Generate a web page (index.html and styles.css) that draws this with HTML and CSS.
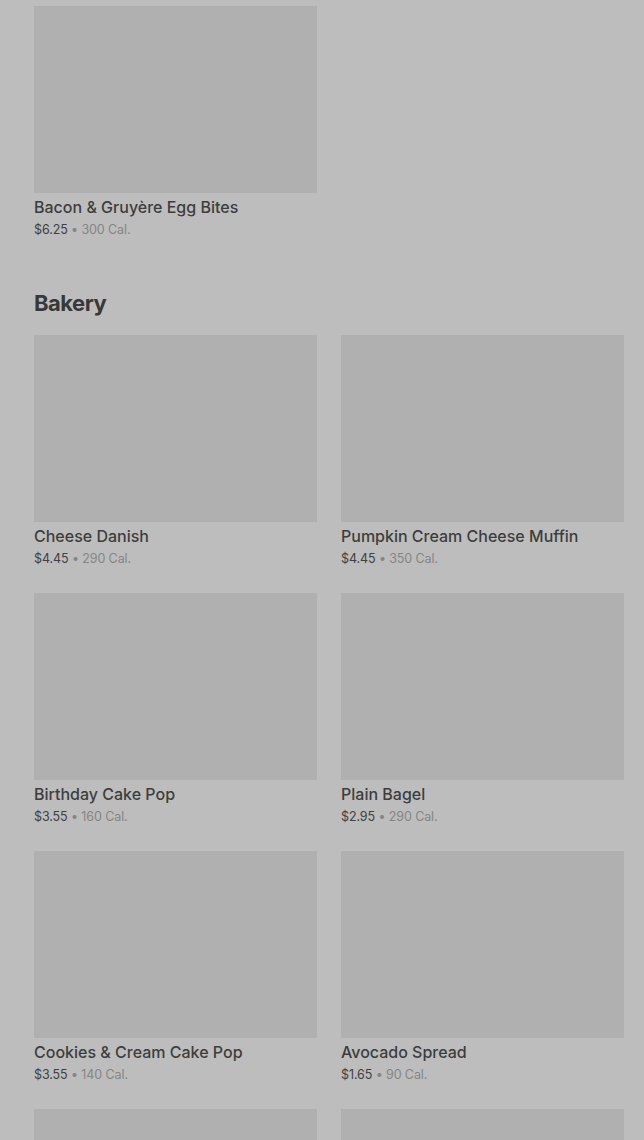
FILE: index.html
```html
<!DOCTYPE html>
<html>
<head>
<meta charset="utf-8">
<link rel="stylesheet" href="styles.css">
</head>
<body>
<div class="page">
  <section class="section">
    <div class="grid">
      <div class="card">
        <div class="thumb"></div>
        <div class="name">Bacon &amp; Gruyère Egg Bites</div>
        <div class="meta"><span class="price">$6.25</span> <span class="cal">• 300 Cal.</span></div>
      </div>
    </div>
  </section>
  <section class="section">
    <h2 class="heading">Bakery</h2>
    <div class="grid">
      <div class="card">
        <div class="thumb"></div>
        <div class="name">Cheese Danish</div>
        <div class="meta"><span class="price">$4.45</span> <span class="cal">• 290 Cal.</span></div>
      </div>
      <div class="card">
        <div class="thumb"></div>
        <div class="name">Pumpkin Cream Cheese Muffin</div>
        <div class="meta"><span class="price">$4.45</span> <span class="cal">• 350 Cal.</span></div>
      </div>
      <div class="card">
        <div class="thumb"></div>
        <div class="name">Birthday Cake Pop</div>
        <div class="meta"><span class="price">$3.55</span> <span class="cal">• 160 Cal.</span></div>
      </div>
      <div class="card">
        <div class="thumb"></div>
        <div class="name">Plain Bagel</div>
        <div class="meta"><span class="price">$2.95</span> <span class="cal">• 290 Cal.</span></div>
      </div>
      <div class="card">
        <div class="thumb"></div>
        <div class="name">Cookies &amp; Cream Cake Pop</div>
        <div class="meta"><span class="price">$3.55</span> <span class="cal">• 140 Cal.</span></div>
      </div>
      <div class="card">
        <div class="thumb"></div>
        <div class="name">Avocado Spread</div>
        <div class="meta"><span class="price">$1.65</span> <span class="cal">• 90 Cal.</span></div>
      </div>
      <div class="card">
        <div class="thumb"></div>
        <div class="name">&nbsp;</div>
        <div class="meta">&nbsp;</div>
      </div>
      <div class="card">
        <div class="thumb"></div>
        <div class="name">&nbsp;</div>
        <div class="meta">&nbsp;</div>
      </div>
    </div>
  </section>
</div>
</body>
</html>
```
FILE: styles.css
```css
html, body {
  margin: 0;
  padding: 0;
  background: #bdbdbd;
  overflow: hidden;
}
body {
  font-family: Inter, Roboto, "Liberation Sans", sans-serif;
  color: #3b3b3b;
}
.page {
  padding: 6px 20px 0 34px;
}
.grid {
  display: grid;
  grid-template-columns: 283px 283px;
  column-gap: 24px;
  row-gap: 25px;
}
.thumb {
  height: 187px;
  background: #b0b0b0;
}
.name {
  margin-top: 3px;
  font-size: 16px;
  line-height: 22px;
  font-weight: 500;
  color: #3d3d3d;
}
.meta {
  margin-top: 3px;
  font-size: 12.5px;
  line-height: 18px;
  letter-spacing: -0.1px;
}
.price {
  color: #404040;
}
.cal {
  color: #858585;
}
.heading {
  margin: 49px 0 17px;
  font-family: Inter, "Open Sans", sans-serif;
  font-size: 22px;
  line-height: 30px;
  font-weight: 700;
  letter-spacing: -0.5px;
  color: #383838;
}
```
